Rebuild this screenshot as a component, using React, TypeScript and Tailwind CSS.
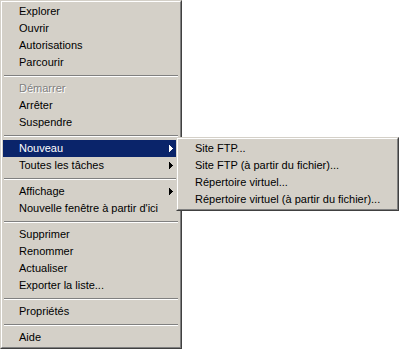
const groups: { label: string; disabled?: boolean; arrow?: boolean; active?: boolean }[][] = [
  [{ label: "Explorer" }, { label: "Ouvrir" }, { label: "Autorisations" }, { label: "Parcourir" }],
  [{ label: "Démarrer", disabled: true }, { label: "Arrêter" }, { label: "Suspendre" }],
  [
    { label: "Nouveau", arrow: true, active: true },
    { label: "Toutes les tâches", arrow: true },
  ],
  [{ label: "Affichage", arrow: true }, { label: "Nouvelle fenêtre à partir d'ici" }],
  [
    { label: "Supprimer" },
    { label: "Renommer" },
    { label: "Actualiser" },
    { label: "Exporter la liste..." },
  ],
  [{ label: "Propriétés" }],
  [{ label: "Aide" }],
];

const subItems = [
  "Site FTP...",
  "Site FTP (à partir du fichier)...",
  "Répertoire virtuel...",
  "Répertoire virtuel (à partir du fichier)...",
];

const Arrow = ({ white }: { white?: boolean }) => (
  <svg width="4" height="7" viewBox="0 0 4 7" className="absolute right-[6px] top-[5px]">
    <path d="M0 0 L4 3.5 L0 7 Z" fill={white ? "#ffffff" : "#000000"} shapeRendering="crispEdges" />
  </svg>
);

const Frame = ({ className, children }: { className: string; children: React.ReactNode }) => (
  <div
    className={`border border-t-[#d4d0c8] border-l-[#d4d0c8] border-r-[#404040] border-b-[#404040] bg-[#d4d0c8] ${className}`}
  >
    <div className="h-full border border-t-white border-l-white border-r-[#808080] border-b-[#808080] p-px">
      {children}
    </div>
  </div>
);

const Separator = () => (
  <div className="flex h-[9px] flex-col justify-center px-px">
    <div className="h-px bg-[#808080]" />
    <div className="h-px bg-white" />
  </div>
);

const App = () => {
  return (
    <div className="relative h-[349px] w-[409px] bg-white font-['Liberation_Sans',Arial,sans-serif] text-[11px] text-black">
      <Frame className="h-[349px] w-[182px]">
        {groups.map((group, gi) => (
          <div key={gi}>
            {gi > 0 && <Separator />}
            {group.map((item) => (
              <div
                key={item.label}
                className={`relative h-[17px] whitespace-nowrap pl-[16px] leading-[17px] ${
                  item.active ? "bg-[#0a246a] text-white" : ""
                } ${item.disabled ? "text-[#808080] [text-shadow:1px_1px_0_#ffffff]" : ""}`}
              >
                {item.label}
                {item.arrow && <Arrow white={item.active} />}
              </div>
            ))}
          </div>
        ))}
      </Frame>
      <Frame className="absolute left-[176px] top-[137px] h-[74px] w-[223px]">
        {subItems.map((label) => (
          <div key={label} className="h-[17px] whitespace-nowrap pl-[16px] leading-[17px]">
            {label}
          </div>
        ))}
      </Frame>
    </div>
  );
};

export default App;
